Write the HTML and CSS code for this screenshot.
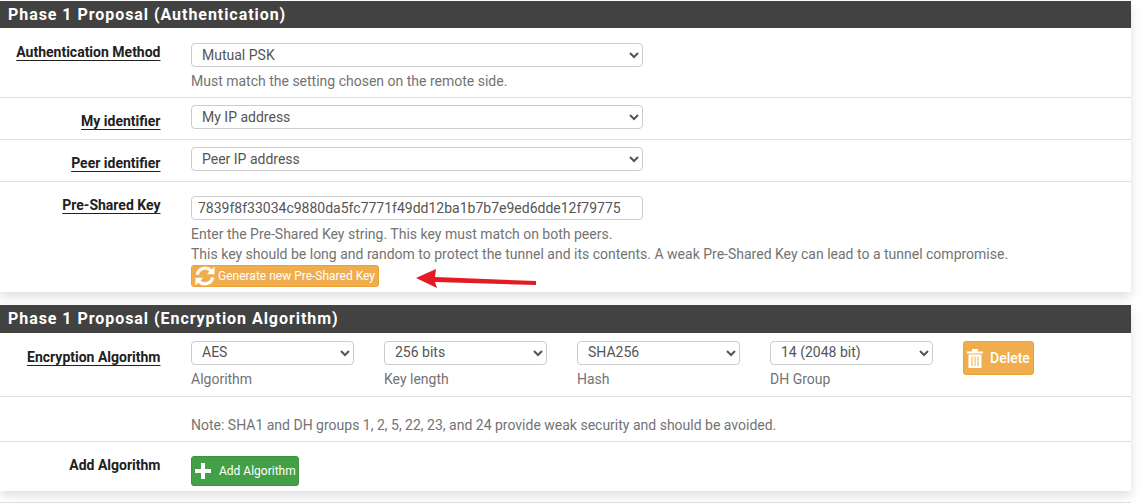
FILE: index.html
```html
<!DOCTYPE html>
<html lang="en">
<head>
<meta charset="utf-8">
<title>Phase 1 Proposal</title>
<link rel="stylesheet" href="styles.css">
</head>
<body>
<section class="panel first">
  <h2 class="head">Phase 1 Proposal (Authentication)</h2>
  <div class="row r1">
    <span class="label u">Authentication Method</span>
    <div class="ctl">
      <select class="sel wide"><option>Mutual PSK</option></select>
      <p class="help">Must match the setting chosen on the remote side.</p>
    </div>
  </div>
  <div class="row r2">
    <span class="label u low">My identifier</span>
    <div class="ctl"><select class="sel wide"><option>My IP address</option></select></div>
  </div>
  <div class="row r2">
    <span class="label u low">Peer identifier</span>
    <div class="ctl"><select class="sel wide"><option>Peer IP address</option></select></div>
  </div>
  <div class="row r4">
    <span class="label u">Pre-Shared Key</span>
    <div class="ctl">
      <input class="key" type="text" value="7839f8f33034c9880da5fc7771f49dd12ba1b7b7e9ed6dde12f79775">
      <p class="help keyhelp">Enter the Pre-Shared Key string. This key must match on both peers.<br>This key should be long and random to protect the tunnel and its contents. A weak Pre-Shared Key can lead to a tunnel compromise.</p>
      <button class="btn warn gen" type="button">
        <svg class="ic" viewBox="1 1 22 22" width="20" height="20"><path fill="none" stroke="#fff" stroke-width="3.6" d="M3.500 10.500A8.800 8.800 0 0 1 18.600 6.200M20.500 13.500A8.800 8.800 0 0 1 5.400 17.800"/><path fill="#fff" d="M22.500 1.500v8.500H14zM1.500 22.500V14H10z"/></svg>
        Generate new Pre-Shared Key
      </button>
    </div>
  </div>
</section>
<section class="panel second">
  <h2 class="head">Phase 1 Proposal (Encryption Algorithm)</h2>
  <div class="row r5">
    <span class="label u mid">Encryption Algorithm</span>
    <div class="algos">
      <div class="algo"><select class="sel"><option>AES</option></select><p class="help">Algorithm</p></div>
      <div class="algo"><select class="sel"><option>256 bits</option></select><p class="help">Key length</p></div>
      <div class="algo"><select class="sel"><option>SHA256</option></select><p class="help">Hash</p></div>
      <div class="algo"><select class="sel"><option>14 (2048 bit)</option></select><p class="help">DH Group</p></div>
      <button class="btn warn del" type="button">
        <svg class="ic" viewBox="0 0 16 19" width="16" height="19"><path fill="#fff" d="M0 2.500h16v2H0zM5 0h6v2.500H5zM1.500 5.500h13V19h-13z"/><path fill="#f0ad4e" d="M4.500 7.500h1v9.500h-1zM7.500 7.500h1v9.500h-1zM10.500 7.500h1v9.500h-1z"/></svg>
        Delete
      </button>
    </div>
  </div>
  <div class="row r6"><p class="help note">Note: SHA1 and DH groups 1, 2, 5, 22, 23, and 24 provide weak security and should be avoided.</p></div>
  <div class="row r7">
    <span class="label plain">Add Algorithm</span>
    <button class="btn ok add" type="button">
      <svg class="ic" viewBox="0 0 18 18" width="18" height="18"><path fill="#fff" d="M7 1h4v6h6v4h-6v6H7v-6H1V7h6z"/></svg>
      Add Algorithm
    </button>
  </div>
</section>
<div class="next"></div>
<svg class="arrow" width="125" height="22" viewBox="0 0 125 22"><path fill="#e31b23" d="M1 10 21 1 20 9 121 13 121 17 20 14 22 20z"/></svg>
</body>
</html>
```
FILE: styles.css
```css
* { box-sizing: border-box; }
html, body { margin: 0; padding: 0; }
body {
  width: 1141px;
  height: 503px;
  overflow: hidden;
  position: relative;
  padding-top: 1px;
  background: #fff;
  color: #212121;
  font: 14px/20px Roboto, sans-serif;
}
.panel {
  width: 1131px;
  background: #fff;
  box-shadow: 0 5px 10px rgba(0, 0, 0, .13);
}
.second { margin-top: 13px; }
.head {
  margin: 0;
  height: 27px;
  padding: 0 8px;
  background: #424242;
  color: #fff;
  font: 700 16px/27px Roboto, sans-serif;
  letter-spacing: .95px;
}
.second .head { height: 28px; line-height: 28px; }
.row {
  display: flex;
  align-items: flex-start;
  border-bottom: 1px solid #e0e0e0;
}
.row:last-child { border-bottom: 0; }
.r1 { height: 70px; padding-top: 15px; }
.r2 { height: 42px; padding-top: 7px; }
.r4 { height: 110px; padding-top: 14px; }
.r5 { height: 64px; padding-top: 8px; }
.r6 { height: 45px; padding: 14px 0 0 191px; }
.r7 { height: 49px; padding-top: 14px; }
.label {
  width: 160.5px;
  flex: none;
  margin-right: 30.5px;
  text-align: right;
  font-weight: 700;
  color: #212121;
}
.r1 .label, .r4 .label, .r7 .label { margin-top: -1px; }
.u { text-decoration: underline; text-underline-offset: 3px; text-decoration-thickness: 1px; }
.low { position: relative; top: 6px; }
.mid { position: relative; top: 6px; }
.ctl { width: 940px; }
.sel {
  display: block;
  width: 100%;
  height: 24px;
  padding: 0 6px;
  background: #fff;
  border: 1px solid #ccc;
  border-radius: 4px;
  color: #555;
  font: 14px Roboto, sans-serif;
}
.algo .sel { padding-bottom: 2px; }
.wide { width: 452px; }
.help { margin: 4px 0 0; color: #737373; font-size: 14px; line-height: 20px; }
.key {
  display: block;
  width: 452px;
  height: 24px;
  padding: 0 6px;
  border: 1px solid #ccc;
  border-radius: 4px;
  color: #555;
  font: 14px Roboto, sans-serif;
}
.keyhelp { margin-top: 4px; }
.btn {
  display: inline-flex;
  align-items: center;
  border-radius: 3px;
  color: #fff;
  font: 400 12px Roboto, sans-serif;
  cursor: pointer;
}
.warn { background: #f0ad4e; border: 1px solid #eea236; }
.ok { background: #43a047; border: 1px solid #3d9140; }
.gen { width: 188px; height: 22px; padding: 0 0 0 3px; gap: 3px; margin-top: 1px; white-space: nowrap; }
.algos { display: flex; align-items: flex-start; gap: 30px; }
.algo { width: 163px; }
.del { width: 71px; height: 34px; padding: 0 0 0 3px; gap: 7px; font-size: 14px; font-weight: 500; }
.add { width: 108px; height: 30px; padding: 0 0 0 2px; gap: 7px; white-space: nowrap; }
.next { margin-top: 11px; height: 1px; background: #e0e0e0; width: 1131px; }
.arrow { position: absolute; left: 415px; top: 268px; }
```
